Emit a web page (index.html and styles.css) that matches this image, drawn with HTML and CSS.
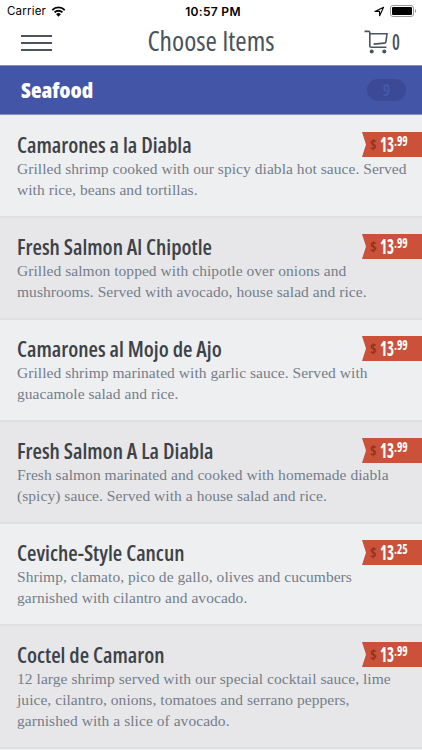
FILE: index.html
```html
<!DOCTYPE html>
<html lang="en">
<head>
    <meta charset="UTF-8">
    <meta name="viewport" content="width=device-width, initial-scale=1.0">
    <title>Choose Items</title>
    <link rel="stylesheet" href="styles.css">
</head>
<body>
    <div class="status-bar">
        <div class="carrier">
            <span>Carrier</span>
            <svg class="wifi" width="15" height="11" viewBox="0 0 16 12">
                <path d="M1.2 4.4a9.6 9.6 0 0 1 13.6 0M3.7 7a6.1 6.1 0 0 1 8.6 0" fill="none" stroke="#000" stroke-width="2"/>
                <path d="M8 11.6L5.4 9a3.7 3.7 0 0 1 5.2 0z"/>
            </svg>
        </div>
        <div class="clock">10:57 PM</div>
        <div class="indicators">
            <svg width="11" height="11" viewBox="0 0 11 11">
                <path d="M1 5.4L9.6 1.2 5.6 9.8V5.4z" fill="none" stroke="#000" stroke-width="1.1" stroke-linejoin="round"/>
            </svg>
            <svg width="27" height="12" viewBox="0 0 27 12">
                <rect x=".5" y=".5" width="23" height="11" rx="2.5" fill="#fff" stroke="#999"/>
                <rect x="2" y="2" width="20" height="8" rx="1"/>
                <path d="M25 4v4c1.6-.6 1.6-3.4 0-4z" fill="#999"/>
            </svg>
        </div>
    </div>

    <header class="nav-bar">
        <button class="menu-button" aria-label="Menu"><i></i><i></i><i></i></button>
        <h1>Choose Items</h1>
        <div class="cart">
            <svg width="24" height="24" viewBox="0 0 24 24" fill="none" stroke="#4b535c" stroke-width="1.6">
                <path d="M.5 1.4h4.2q1.1 0 1.1 1.2v13.2q0 1.4 1.4 1.4h15.3M5.8 3.8h17.2l-1.1 8q-.2 1.2-1.5 1.3l-10.8 1"/>
                <circle cx="7.7" cy="21.6" r="2" fill="#4b535c" stroke="none"/>
                <circle cx="20.3" cy="21.6" r="2" fill="#4b535c" stroke="none"/>
            </svg>
            <span>0</span>
        </div>
    </header>

    <div class="section-bar">
        <h2>Seafood</h2>
        <span class="count">9</span>
    </div>

    <ul class="items">
        <li class="item">
            <h3>Camarones a la Diabla</h3>
            <p>Grilled shrimp cooked with our spicy diabla hot sauce. Served<br>with rice, beans and tortillas.</p>
            <div class="price"><i>$</i><b>13</b><sup>.99</sup></div>
        </li>
        <li class="item">
            <h3>Fresh Salmon Al Chipotle</h3>
            <p>Grilled salmon topped with chipotle over onions and<br>mushrooms. Served with avocado, house salad and rice.</p>
            <div class="price"><i>$</i><b>13</b><sup>.99</sup></div>
        </li>
        <li class="item">
            <h3>Camarones al Mojo de Ajo</h3>
            <p>Grilled shrimp marinated with garlic sauce. Served with<br>guacamole salad and rice.</p>
            <div class="price"><i>$</i><b>13</b><sup>.99</sup></div>
        </li>
        <li class="item">
            <h3>Fresh Salmon A La Diabla</h3>
            <p>Fresh salmon marinated and cooked with homemade diabla<br>(spicy) sauce. Served with a house salad and rice.</p>
            <div class="price"><i>$</i><b>13</b><sup>.99</sup></div>
        </li>
        <li class="item">
            <h3>Ceviche-Style Cancun</h3>
            <p>Shrimp, clamato, pico de gallo, olives and cucumbers<br>garnished with cilantro and avocado.</p>
            <div class="price"><i>$</i><b>13</b><sup>.25</sup></div>
        </li>
        <li class="item">
            <h3>Coctel de Camaron</h3>
            <p>12 large shrimp served with our special cocktail sauce, lime<br>juice, cilantro, onions, tomatoes and serrano peppers,<br>garnished with a slice of avocado.</p>
            <div class="price"><i>$</i><b>13</b><sup>.99</sup></div>
        </li>
    </ul>
</body>
</html>
```

FILE: styles.css
```css
* {
    box-sizing: border-box;
}

body {
    margin: 0;
    height: 750px;
    overflow: hidden;
    background-color: #eeeff1;
    font-family: "Open Sans", "Noto Sans", sans-serif;
    font-stretch: 75%;
}

h1, h2, h3, p, ul {
    margin: 0;
    padding: 0;
    font-weight: normal;
}

.status-bar {
    display: grid;
    grid-template-columns: 1fr auto 1fr;
    align-items: center;
    height: 22px;
    padding: 0 5px 0 7px;
    background-color: #fff;
    font-family: Inter, sans-serif;
    font-stretch: normal;
    font-size: 12px;
    color: #000;
}

.carrier, .indicators {
    display: flex;
    align-items: center;
    gap: 5px;
}

.carrier {
    font-size: 11.5px;
    letter-spacing: 0.2px;
}

.clock {
    padding-left: 2px;
    font-weight: 600;
    letter-spacing: 0.3px;
}

.indicators {
    justify-content: flex-end;
}

.nav-bar {
    display: grid;
    grid-template-columns: 60px 1fr 60px;
    align-items: center;
    height: 43px;
    background-color: #fff;
    color: #4b535c;
}

.menu-button {
    display: flex;
    flex-direction: column;
    gap: 5px;
    width: 31px;
    margin: 0 0 2px 21px;
    padding: 0;
    border: none;
    background: none;
}

.menu-button i {
    height: 2px;
    background-color: #4b535c;
}

h1 {
    padding-bottom: 8px;
    font-size: 27.6px;
    font-weight: 400;
    line-height: 36px;
    text-align: center;
}

.cart {
    display: flex;
    align-items: center;
    gap: 4px;
    padding: 0 0 4px 2px;
    font-size: 22px;
    line-height: 24px;
}

.cart span {
    margin-top: -3px;
    font-weight: 650;
    transform: scaleX(0.8);
    transform-origin: left;
}

.section-bar {
    display: flex;
    align-items: center;
    justify-content: space-between;
    height: 50px;
    padding: 0 16px 0 21px;
    border-top: 1px solid #8790bd;
    border-bottom: 1px solid #8790bd;
    background-color: #4355a6;
    color: #fff;
}

h2 {
    padding-bottom: 2px;
    font-size: 21.8px;
    font-weight: 800;
}

.count {
    width: 39px;
    height: 22px;
    border-radius: 11px;
    background-color: #3c4996;
    color: #4557a8;
    font-size: 16px;
    font-weight: 700;
    line-height: 22px;
    text-align: center;
}

.items {
    padding-top: 1px;
    list-style: none;
}

.item {
    position: relative;
    padding: 16px 0 16px 17px;
    border-bottom: 2px solid #dedfe1;
    background-color: #eeeff1;
}

.item:nth-child(even) {
    background-color: #e7e7e9;
}

h3 {
    font-size: 21.6px;
    font-weight: 550;
    line-height: 26px;
    color: #3d4248;
    white-space: nowrap;
}

.item p {
    font-family: "Liberation Serif", serif;
    font-size: 15.5px;
    line-height: 21px;
    letter-spacing: 0.05px;
    color: #747d89;
    white-space: nowrap;
}

/* ribbon pinned to the right edge of the row */
.price {
    position: absolute;
    top: 16px;
    right: 0;
    display: flex;
    align-items: center;
    width: 60px;
    height: 25px;
    padding-left: 8px;
    background-color: #cb513a;
    clip-path: polygon(0 0, 100% 0, 100% 100%, 0 100%, 4px 50%);
    color: #fff;
}

.price i {
    width: 10px;
    font-size: 14px;
    font-style: normal;
    font-weight: 700;
    color: #8f3423;
}

/* the figures are narrower than the condensed face */
.price b {
    width: 14px;
    padding-bottom: 1px;
    font-size: 21px;
    font-weight: 700;
    transform: scaleX(0.72);
    transform-origin: left;
}

.price sup {
    padding-bottom: 7px;
    font-size: 14px;
    font-weight: 700;
    line-height: 16px;
    transform: scaleX(0.82);
    transform-origin: left;
}
```
